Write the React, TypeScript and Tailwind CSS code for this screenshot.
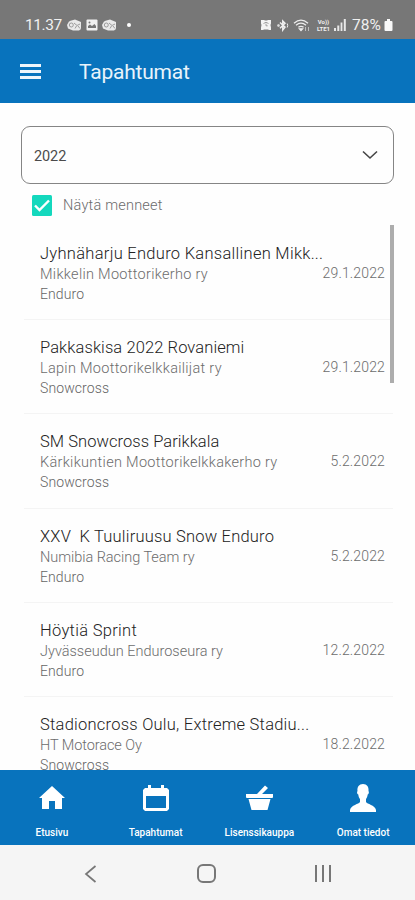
import React from "react";
import clsx from "clsx";

const events = [
  {
    title: "Jyhnäharju Enduro Kansallinen Mikk...",
    club: "Mikkelin Moottorikerho ry",
    type: "Enduro",
    date: "29.1.2022",
    titleTracking: "tracking-[0.28px]",
    clubTracking: "tracking-[0.3px]",
  },
  {
    title: "Pakkaskisa 2022 Rovaniemi",
    club: "Lapin Moottorikelkkailijat ry",
    type: "Snowcross",
    date: "29.1.2022",
    titleTracking: "tracking-[0.1px]",
    clubTracking: "tracking-[0.3px]",
  },
  {
    title: "SM Snowcross Parikkala",
    club: "Kärkikuntien Moottorikelkkakerho ry",
    type: "Snowcross",
    date: "5.2.2022",
    titleTracking: "tracking-[0.05px]",
    clubTracking: "tracking-[0.3px]",
  },
  {
    title: "XXV  K Tuuliruusu Snow Enduro",
    club: "Numibia Racing Team ry",
    type: "Enduro",
    date: "5.2.2022",
    titleTracking: "tracking-[0.2px]",
    clubTracking: "tracking-[-0.04px]",
  },
  {
    title: "Höytiä Sprint",
    club: "Jyvässeudun Enduroseura ry",
    type: "Enduro",
    date: "12.2.2022",
    titleTracking: "tracking-[0.3px]",
    clubTracking: "tracking-normal",
  },
  {
    title: "Stadioncross Oulu, Extreme Stadiu...",
    club: "HT Motorace Oy",
    type: "Snowcross",
    date: "18.2.2022",
    titleTracking: "tracking-[0.24px]",
    clubTracking: "tracking-[-0.08px]",
  },
];

function MailIcon() {
  return (
    <svg width="15" height="12" viewBox="0 0 15 12" fill="none">
      <path d="M4.5 1.5 8 .5l6 2.5v7l-2 1.5H6L1 9.5 0 6l2-3.5z" fill="#e9e9e9" />
      <circle cx="4.3" cy="6" r="2" stroke="#888" strokeWidth=".8" />
      <path d="m7 4 3 2.500 3-1.500M8 9.500l1.500-2.500M13 9.500l-2-2.500" stroke="#888" strokeWidth=".8" />
    </svg>
  );
}

function PictureIcon() {
  return (
    <svg width="12" height="12" viewBox="0 0 12 12">
      <rect x=".5" y=".5" width="11" height="11" rx="1" fill="#f1f1f1" />
      <path d="M2 9V7l2-1.500 2 1.500 2.500-2L10 7v2z" fill="#777" />
      <circle cx="3.500" cy="3.500" r="1" fill="#777" />
    </svg>
  );
}

function StatusBar() {
  return (
    <div className="flex h-[39px] shrink-0 items-start bg-[#777777] pt-[17px] text-[#f0f0f0]">
      <div className="flex h-4 w-full items-center pr-[22px] pl-[25px]">
        <span className="w-[42px] text-[15.5px] leading-4 tracking-[-0.4px] whitespace-nowrap">11.37</span>
        <MailIcon />
        <span className="ml-[4px]">
          <PictureIcon />
        </span>
        <span className="ml-[4px]">
          <MailIcon />
        </span>
        <span className="ml-[10px] h-1 w-1 rounded-full bg-white" />

        <div className="ml-auto flex items-center">
          {/* Alarm */}
          <svg width="12" height="12" viewBox="0 0 12 12">
            <path d="M1 1h3.500v.5h3V1H11v3.500l-.5 1.500.5 2.500V11H9l-1-.5H4L3 11H1V8.500L1.500 6 1 4.500z" fill="#f3f3f3" />
            <path d="M3.500 4.500Q6 2 8.500 4.500M6 4.500v2.300h1.700" fill="none" stroke="#8a8a8a" strokeWidth=".8" />
          </svg>
          {/* Bluetooth */}
          <svg className="ml-[5px]" width="12" height="13" viewBox="0 0 12 13" fill="none" stroke="#f0f0f0" strokeWidth="1.500">
            <path d="m3 3.500 5 4.700L5.800 11V2l2.200 2.300L3 9.200" />
            <circle cx="1.500" cy="6.500" r=".5" />
            <path d="M10.200 4.500q1 2 0 4" strokeWidth="1" />
          </svg>
          {/* Wifi */}
          <svg className="ml-[4px]" width="18" height="13" viewBox="0 0 18 13" fill="none" stroke="#ededed" strokeWidth="1.300">
            <path d="M1 4.200Q8 -2 15 4.200M3 6.300q5-4.200 10 0M5.400 8.300q2.600-2 5.200 0" />
            <path d="m8 11.500-1.500-1.700h3z" fill="#ededed" />
            <path d="M12.500 12V8M15.500 8v4" strokeWidth="1" opacity=".6" />
          </svg>
          <span className="ml-[5px] flex w-[15px] flex-col items-center text-[6px] leading-[7px] font-bold">
            <span>Vo))</span>
            <span>LTE1</span>
          </span>
          {/* Signal */}
          <svg className="ml-[3px]" width="12" height="12" viewBox="0 0 12 12" fill="#e8e8e8">
            <path d="M0 9h2v3H0zM3.300 6.500h2V12h-2zM6.600 3.500h1.800V12H6.600zM9.800 0h2v12h-2z" />
          </svg>
          <span className="ml-[6px] w-[31px] text-[15.5px] leading-4 whitespace-nowrap">78%</span>
          {/* Battery */}
          <svg className="ml-[1px]" width="9" height="12" viewBox="0 0 9 12" fill="#f8f8f8">
            <path d="M3 0h3v2H3z" />
            <rect x=".5" y="2" width="8" height="10" rx="1" />
          </svg>
        </div>
      </div>
    </div>
  );
}

function Header() {
  return (
    <header className="flex h-16 shrink-0 items-center bg-[#0873bd] pl-5 text-white">
      <button className="flex w-[21px] flex-col gap-[3px]" aria-label="Menu">
        <span className="h-[3px] w-full bg-[#eef5fb]" />
        <span className="h-[3px] w-full bg-[#eef5fb]" />
        <span className="h-[3px] w-full bg-[#eef5fb]" />
      </button>
      <h1 className="ml-[38px] pt-[2px] text-[21px] leading-6 tracking-[-0.2px] text-[#e9f3fb]">Tapahtumat</h1>
    </header>
  );
}

function Filters() {
  return (
    <div className="h-[122px] shrink-0 pt-[23px] pr-[21px] pl-[21px]">
      <button className="flex h-[58px] w-full items-center justify-between rounded-[9px] border-[1.5px] border-[#858585] pr-[14px] pl-[12px] text-[#4b4b4b]">
        <span className="pt-[3px] text-[14.5px] tracking-[-0.1px]">2022</span>
        <svg width="18" height="10" viewBox="0 0 18 10" fill="none" stroke="#454545" strokeWidth="1.600">
          <path d="m2 1.500 7 6.500 7-6.500" />
        </svg>
      </button>
      <label className="mt-[10px] flex items-center pl-[11px]">
        <svg width="20" height="21" viewBox="0 0 20 21">
          <rect width="20" height="21" rx="1.500" fill="#14d8bd" />
          <path d="m3 10.500 4.500 4.500L17 5.500" fill="none" stroke="#fff" strokeWidth="2.400" />
        </svg>
        <span className="ml-[11px] pt-[2px] text-[14.5px] leading-5 font-light tracking-[0.22px] text-[#6b6b6b]">Näytä menneet</span>
      </label>
    </div>
  );
}

function EventList() {
  return (
    <div className="relative min-h-0 flex-1 overflow-hidden pt-px pr-[22px] pl-6">
      {events.map((event) => (
        <div key={event.title} className="flex h-[94.2px] border-b border-[#f4f4f4] pt-[17px] pr-[8px] pl-4 font-light">
          <div className="w-0 flex-1 whitespace-pre">
            <div className={clsx("text-[16.5px] leading-[22px] text-[#222]", event.titleTracking)}>{event.title}</div>
            <div className={clsx("text-[14.5px] leading-5 text-[#6c6c6c]", event.clubTracking)}>{event.club}</div>
            <div className="text-[14px] leading-[18px] tracking-[0.1px] text-[#656565]">{event.type}</div>
          </div>
          <div className="pt-5 text-[14px] leading-5 tracking-[0.15px] text-[#6c6c6c]">{event.date}</div>
        </div>
      ))}
      {/* Scrollbar */}
      <div className="absolute top-0 right-[21px] h-[158px] w-1 bg-[#adadad]" />
    </div>
  );
}

function TabItem({ label, children }: { label: string; children: React.ReactNode }) {
  return (
    <a href="#" className="flex flex-1 flex-col items-center pt-[13px]">
      <span className="flex h-[30px] items-center">{children}</span>
      <span className="mt-[12px] text-[10px] leading-4 font-medium whitespace-nowrap">{label}</span>
    </a>
  );
}

function TabBar() {
  return (
    <nav className="flex h-[75px] shrink-0 bg-[#0873bd] text-white">
      <TabItem label="Etusivu">
        <svg width="26" height="24" viewBox="0 0 26 24" fill="currentColor">
          <path d="M13 0 0 12h3v11h7v-8h6v8h7V12h3z" />
        </svg>
      </TabItem>
      <TabItem label="Tapahtumat">
        <svg width="26" height="27" viewBox="0 0 26 27" fill="currentColor">
          <path fillRule="evenodd" d="M5 0h3v3h10V0h3v3h3l2 2v19l-2 2H2l-2-2V5l2-2h3zM3 11v12h20V11z" />
        </svg>
      </TabItem>
      <TabItem label="Lisenssikauppa">
        <svg width="27" height="26" viewBox="0 0 27 26" fill="currentColor">
          <path d="M0 9h11l8-8.500L22 3l-6 6h11v3.500l-1 .500H1l-1-.500zM2.500 14h22l-3 11h-16z" />
        </svg>
      </TabItem>
      <TabItem label="Omat tiedot">
        <svg width="26" height="29" viewBox="0 0 26 29" fill="currentColor">
          <path d="M13 0c4 0 6 3 5.500 7 .8 1 .3 3-.8 3.500-.3 2-1 3.500-1.700 4.500v3c1 2 9 3 10 8v2H0v-2c1-5 9-6 10-8v-3c-.8-1-1.500-2.500-1.700-4.500C7 10 6.700 8 7.500 7 7 3 9 0 13 0z" />
        </svg>
      </TabItem>
    </nav>
  );
}

function SystemNav() {
  return (
    <div className="flex h-[55px] shrink-0 items-center bg-[#f5f5f5] pt-[2px] pr-[84px] pl-[84px] text-[#777]">
      <svg width="13" height="18" viewBox="0 0 13 18" fill="none" stroke="currentColor" strokeWidth="1.700">
        <path d="M11.500 1 2 9l9.500 8" />
      </svg>
      <span className="ml-[100px] h-[19px] w-[19px] rounded-[6px] border-2 border-current" />
      <span className="ml-auto flex w-4 justify-between">
        <span className="h-[17px] w-[2px] bg-current" />
        <span className="h-[17px] w-[2px] bg-current" />
        <span className="h-[17px] w-[2px] bg-current" />
      </span>
    </div>
  );
}

export default function App() {
  return (
    <div className="flex h-[900px] w-[415px] flex-col overflow-hidden bg-[#fefefe] font-[Roboto,sans-serif]">
      <StatusBar />
      <Header />
      <Filters />
      <EventList />
      <TabBar />
      <SystemNav />
    </div>
  );
}
